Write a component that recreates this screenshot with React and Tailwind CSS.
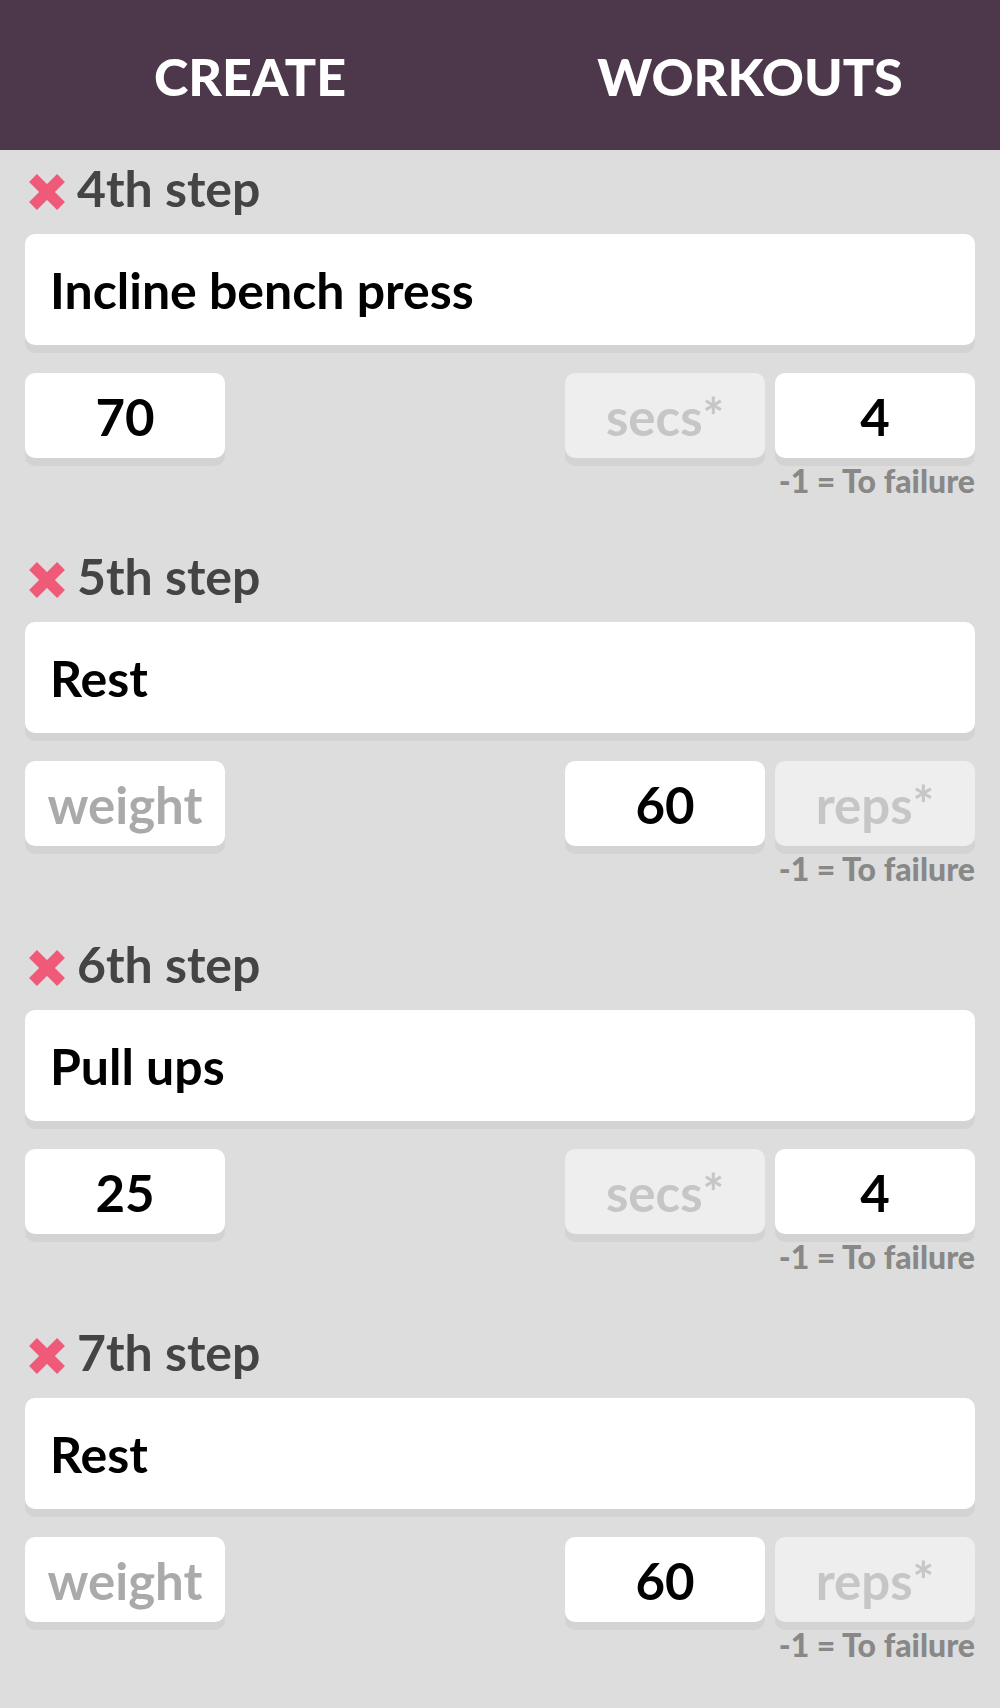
import React from "react";

const steps = [
  {
    title: "4th step",
    name: "Incline bench press",
    boxes: [
      { text: "70", kind: "value" },
      { text: "secs*", kind: "disabled" },
      { text: "4", kind: "value" },
    ],
  },
  {
    title: "5th step",
    name: "Rest",
    boxes: [
      { text: "weight", kind: "placeholder" },
      { text: "60", kind: "value" },
      { text: "reps*", kind: "disabled" },
    ],
  },
  {
    title: "6th step",
    name: "Pull ups",
    boxes: [
      { text: "25", kind: "value" },
      { text: "secs*", kind: "disabled" },
      { text: "4", kind: "value" },
    ],
  },
  {
    title: "7th step",
    name: "Rest",
    boxes: [
      { text: "weight", kind: "placeholder" },
      { text: "60", kind: "value" },
      { text: "reps*", kind: "disabled" },
    ],
  },
];

function XIcon() {
  return (
    <svg width="40" height="40" viewBox="0 0 40 40" className="shrink-0">
      <line x1="6" y1="6" x2="34" y2="34" stroke="#ef5a78" strokeWidth="11" />
      <line x1="34" y1="6" x2="6" y2="34" stroke="#ef5a78" strokeWidth="11" />
    </svg>
  );
}

function Box({ text, kind }) {
  const styles = {
    value: "bg-white text-black",
    placeholder: "bg-white text-[#aaaaaa]",
    disabled: "bg-[#eeeeee] text-[#c6c6c6]",
  };
  return (
    <div
      className={`w-[200px] h-[85px] rounded-[10px] shadow-[0_8px_0_#d3d3d3] flex items-center justify-center pt-[2px] text-[51px] leading-none font-bold ${styles[kind]}`}
    >
      {text}
    </div>
  );
}

function Step({ step }) {
  return (
    <div className="flex flex-col">
      <div className="h-[60px] flex items-center gap-[10px] pl-[2px]">
        <XIcon />
        <span className="mb-[9px] text-[50px] leading-none font-bold text-[#444444]">
          {step.title}
        </span>
      </div>
      <div className="mt-[12px] h-[111px] rounded-[10px] bg-white shadow-[0_8px_0_#d3d3d3] flex items-center pl-[25px] text-[50px] leading-none font-bold text-black">
        {step.name}
      </div>
      <div className="mt-[28px] flex items-center">
        <Box {...step.boxes[0]} />
        <div className="flex-1" />
        <div className="flex gap-[10px]">
          <Box {...step.boxes[1]} />
          <Box {...step.boxes[2]} />
        </div>
      </div>
      <div className="mt-[7px] h-[33px] text-right text-[32px] leading-none font-black text-[#888888]">
        -1 = To failure
      </div>
    </div>
  );
}

export default function App() {
  return (
    <div className="min-h-[1708px] bg-[#dddddd] font-[Lato,sans-serif]">
      <div className="h-[150px] bg-[#4d384b] flex">
        <div className="w-1/2 flex items-center justify-center text-white font-black text-[52px] leading-none pt-[2px]">
          CREATE
        </div>
        <div className="w-1/2 flex items-center justify-center text-white font-black text-[52px] leading-none pt-[2px]">
          WORKOUTS
        </div>
      </div>
      <div className="px-[25px] pt-[12px] flex flex-col gap-[52px]">
        {steps.map((s, i) => (
          <Step key={i} step={s} />
        ))}
      </div>
    </div>
  );
}
